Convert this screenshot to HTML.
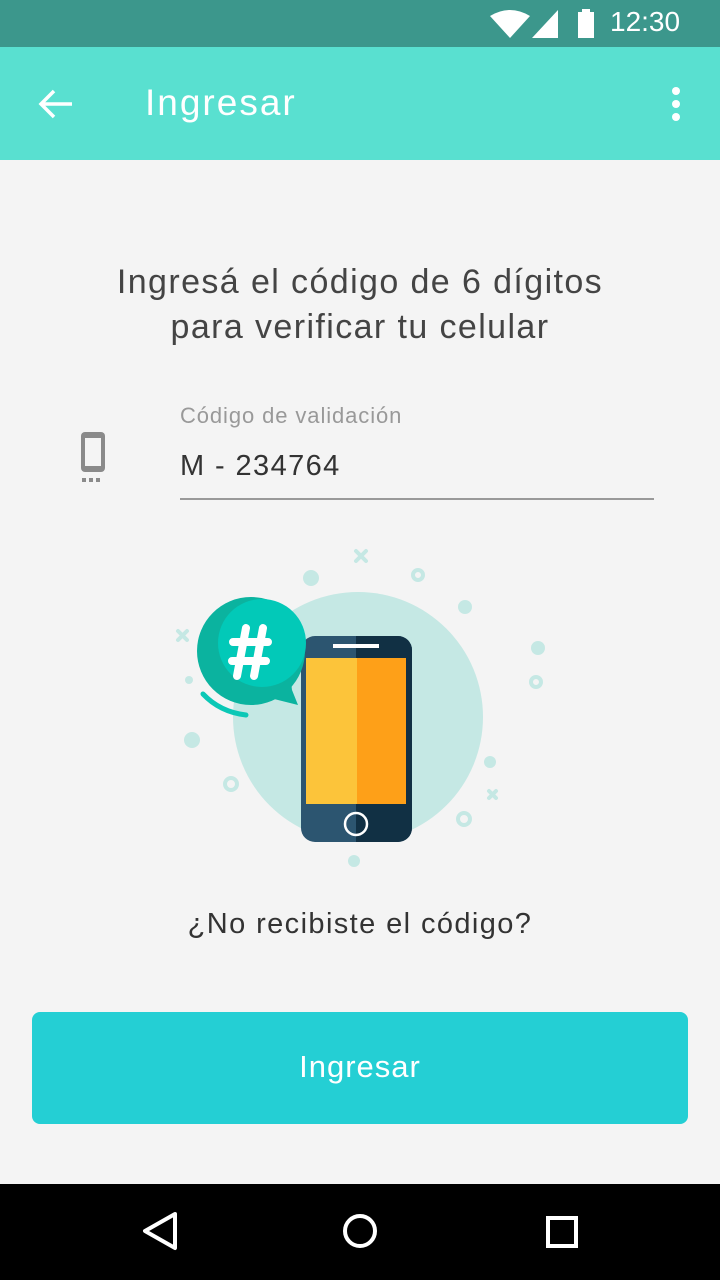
<!DOCTYPE html>
<html><head><meta charset="utf-8"><style>
body{margin:0;width:720px;height:1280px;background:#f4f4f4;font-family:"Liberation Sans",sans-serif;position:relative;overflow:hidden}
.abs{position:absolute}
</style></head><body>
<div class="abs" style="left:0;top:0;width:720px;height:47px;background:#3c978c"></div>
<svg class="abs" style="left:488px;top:8px" width="120" height="32">
<path d="M2 8 Q22 -4 42 8 L22 30 Z" fill="#fff"/>
<path d="M44 30 L70 2 L70 30 Z" fill="#fff"/>
<rect x="90" y="4" width="16" height="26" fill="#fff"/><rect x="94" y="1" width="8" height="4" fill="#fff"/>
</svg>
<div class="abs" style="left:610px;top:6px;color:#fff;font-size:28px">12:30</div>
<div class="abs" style="left:0;top:47px;width:720px;height:113px;background:#59e0d0"></div>
<svg class="abs" style="left:38px;top:88px" width="36" height="32"><path d="M34 16 H4 M16 3 L3 16 L16 29" stroke="#fff" stroke-width="3.5" fill="none"/></svg>
<div class="abs" style="left:145px;top:82px;color:#fff;font-size:37px;letter-spacing:2px">Ingresar</div>
<svg class="abs" style="left:668px;top:86px" width="16" height="38"><circle cx="8" cy="5" r="4" fill="#fff"/><circle cx="8" cy="18" r="4" fill="#fff"/><circle cx="8" cy="31" r="4" fill="#fff"/></svg>
<div class="abs" style="left:0;top:260px;width:720px;text-align:center;color:#444;font-size:34px;line-height:45px;letter-spacing:1.4px">Ingresá el código de 6 dígitos<br>para verificar tu celular</div>
<svg class="abs" style="left:78px;top:430px" width="30" height="54"><rect x="3" y="2" width="24" height="40" rx="4" fill="#8a8a8a"/><rect x="7" y="8" width="16" height="28" fill="#f4f4f4"/><rect x="4" y="48" width="4" height="4" fill="#8a8a8a"/><rect x="11" y="48" width="4" height="4" fill="#8a8a8a"/><rect x="18" y="48" width="4" height="4" fill="#8a8a8a"/></svg>
<div class="abs" style="left:180px;top:403px;color:#999;font-size:22px;letter-spacing:0.9px">Código de validación</div>
<div class="abs" style="left:180px;top:450px;color:#333;font-size:29px;letter-spacing:1.4px">M - 234764</div>
<div class="abs" style="left:180px;top:498px;width:474px;height:2px;background:#999"></div>
<svg class="abs" style="left:160px;top:540px" width="400" height="330">
<g fill="#c5e8e4">
<circle cx="198" cy="177" r="125"/>
<circle cx="151" cy="38" r="8"/><circle cx="305" cy="67" r="7"/><circle cx="378" cy="108" r="7"/><circle cx="32" cy="200" r="8"/><circle cx="29" cy="140" r="4"/><circle cx="330" cy="222" r="6"/><circle cx="194" cy="321" r="6"/>
</g>
<g fill="none" stroke="#c5e8e4" stroke-width="4"><circle cx="258" cy="35" r="5"/><circle cx="376" cy="142" r="5"/><circle cx="71" cy="244" r="6"/><circle cx="304" cy="279" r="6"/></g>
<g stroke="#c5e8e4" stroke-width="4" stroke-linecap="round"><path d="M196 11 L206 21 M206 11 L196 21 M18 91 L27 100 M27 91 L18 100 M329 251 L336 258 M336 251 L329 258"/></g>
<rect x="141" y="96" width="111" height="206" rx="14" fill="#2c5570"/>
<path d="M196 96 H238 A14 14 0 0 1 252 110 V288 A14 14 0 0 1 238 302 H196 Z" fill="#113044"/>
<rect x="146" y="118" width="51" height="146" fill="#fcc43a"/><rect x="197" y="118" width="49" height="146" fill="#fea018"/>
<rect x="173" y="104" width="46" height="4" fill="#fff"/>
<circle cx="196" cy="284" r="11" fill="none" stroke="#fff" stroke-width="2.5"/>
<circle cx="91" cy="111" r="54" fill="#0bb39f"/>
<path d="M110 158 L138 165 L132 150 Q130 140 140 128 Z" fill="#0bb39f"/>
<circle cx="102" cy="103" r="44" fill="#02c9b8"/>
<path d="M43 154 Q60 172 86 175" stroke="#0bc8b6" stroke-width="5" fill="none" stroke-linecap="round"/>
<g stroke="#fff" stroke-width="8" stroke-linecap="round"><path d="M86 88 L77 136 M103 88 L94 136 M73 102 H108 M72 121 H106"/></g>
</svg>
<div class="abs" style="left:0;top:908px;width:720px;text-align:center;color:#333;font-size:29px;letter-spacing:1.4px">¿No recibiste el código?</div>
<div class="abs" style="left:32px;top:1012px;width:656px;height:112px;border-radius:8px;background:#24cfd4;color:#fff;font-size:31px;text-align:center;line-height:110px;letter-spacing:1px">Ingresar</div>
<div class="abs" style="left:0;top:1184px;width:720px;height:96px;background:#000"></div>
<svg class="abs" style="left:0;top:1184px" width="720" height="96">
<path d="M175 30 L145 47 L175 64 Z" fill="none" stroke="#fff" stroke-width="4" stroke-linejoin="round"/>
<circle cx="360" cy="47" r="15" fill="none" stroke="#fff" stroke-width="4"/>
<rect x="548" y="34" width="28" height="28" fill="none" stroke="#fff" stroke-width="4"/>
</svg>
</body></html>
